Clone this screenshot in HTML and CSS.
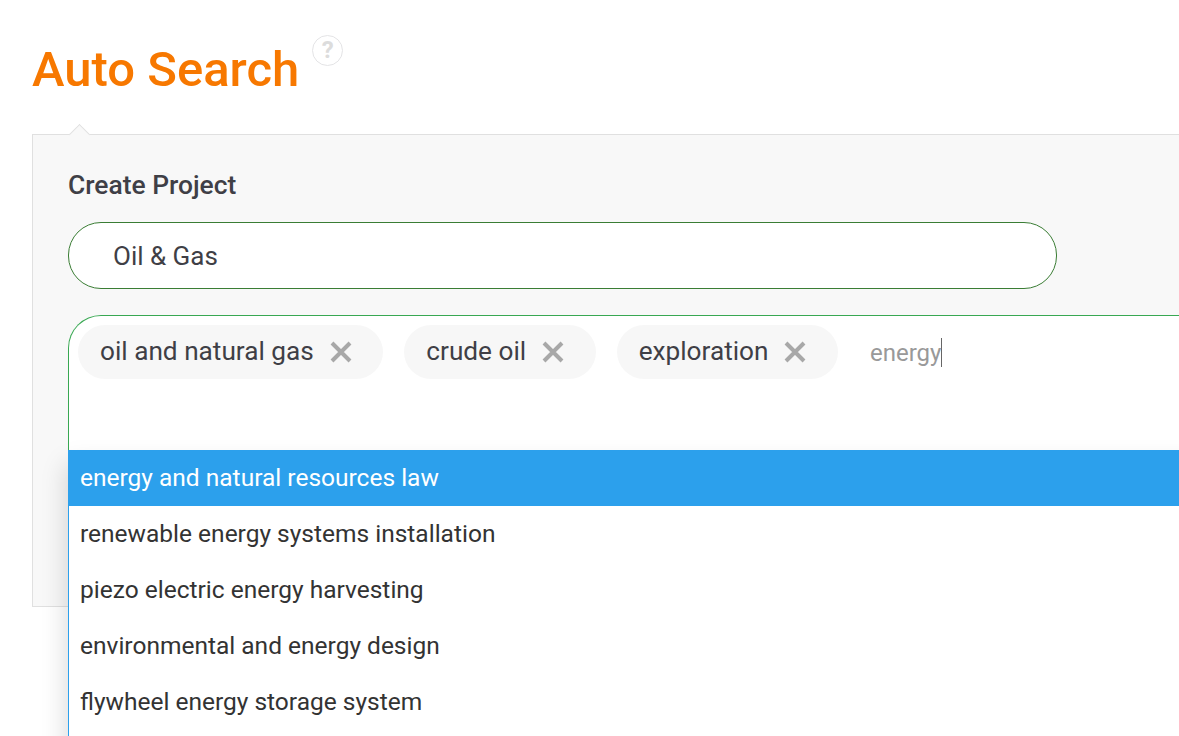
FILE: index.html
```html
<!DOCTYPE html>
<html lang="en">
<head>
  <meta charset="UTF-8">
  <title>Auto Search</title>
  <link rel="stylesheet" href="styles.css">
</head>
<body>
  <div class="heading">
    <h1>Auto Search</h1>
    <span class="help">?</span>
  </div>

  <div class="panel">
    <h2>Create Project</h2>
    <div class="name-field">Oil &amp; Gas</div>

    <div class="tag-box">
      <div class="tag"><span>oil and natural gas</span>
        <svg class="tag-x" viewBox="0 0 22 22"><path d="M2 2 L20 20 M20 2 L2 20"/></svg>
      </div>
      <div class="tag"><span>crude oil</span>
        <svg class="tag-x" viewBox="0 0 22 22"><path d="M2 2 L20 20 M20 2 L2 20"/></svg>
      </div>
      <div class="tag"><span>exploration</span>
        <svg class="tag-x" viewBox="0 0 22 22"><path d="M2 2 L20 20 M20 2 L2 20"/></svg>
      </div>
      <span class="typed">energy</span>

      <ul class="suggestions">
        <li class="active">energy and natural resources law</li>
        <li>renewable energy systems installation</li>
        <li>piezo electric energy harvesting</li>
        <li>environmental and energy design</li>
        <li>flywheel energy storage system</li>
      </ul>
    </div>
  </div>
</body>
</html>
```

FILE: styles.css
```css
html, body {
  height: 736px;
  overflow: hidden;
}

body {
  margin: 0;
  background-color: #fff;
  font-family: Roboto, sans-serif;
  color: #3f3f46;
}

.heading {
  display: flex;
  align-items: flex-start;
  height: 134px;
  padding-left: 32px;
  box-sizing: border-box;
}

h1 {
  margin: 42px 0 0;
  font-size: 49px;
  font-weight: 500;
  line-height: 56px;
  color: #f77800;
}

.help {
  width: 29px;
  height: 29px;
  margin: 35px 0 0 13px;
  border: 1px solid #e4e4e6;
  border-radius: 50%;
  text-align: center;
  font-size: 24px;
  font-weight: 700;
  line-height: 29px;
  color: #dcdcdc;
}

.panel {
  position: relative;
  width: 1300px;
  height: 473px;
  margin-left: 32px;
  padding: 0 0 0 35px;
  box-sizing: border-box;
  background-color: #f8f8f8;
  border: 1px solid #e0e0e0;
}

/* little arrow on top of the panel */
.panel::before {
  content: "";
  position: absolute;
  top: -8px;
  left: 39px;
  width: 14px;
  height: 14px;
  background-color: #f8f8f8;
  border-top: 1px solid #e0e0e0;
  border-left: 1px solid #e0e0e0;
  transform: rotate(45deg);
}

h2 {
  margin: 36px 0 0;
  font-size: 26.4px;
  font-weight: 500;
  line-height: 28px;
  color: #3f3f46;
}

.name-field {
  width: 989px;
  height: 67px;
  margin-top: 23px;
  padding-left: 44px;
  box-sizing: border-box;
  background-color: #fff;
  border: 1px solid #3a7d34;
  border-radius: 33px;
  font-size: 26px;
  line-height: 67px;
}

.tag-box {
  position: relative;
  display: flex;
  align-items: flex-start;
  gap: 21px;
  height: 200px;
  margin-top: 26px;
  padding: 9px 0 0 9px;
  box-sizing: border-box;
  background-color: #fff;
  border: 1px solid #38a852;
  border-right: none;
  border-radius: 33px 0 0 0;
}

.tag {
  display: flex;
  align-items: center;
  gap: 16px;
  height: 54px;
  padding: 0 31.5px 0 22px;
  box-sizing: border-box;
  background-color: #f7f7f7;
  border-radius: 27px;
  font-size: 26.2px;
  white-space: nowrap;
}

.tag span {
  margin-bottom: 2px;
}

.tag-x {
  width: 22px;
  height: 22px;
  fill: none;
  stroke: #a8a8a8;
  stroke-width: 4;
}

.typed {
  height: 29px;
  margin: 13px 0 0 11px;
  border-right: 1px solid #666;
  font-size: 24px;
  line-height: 30px;
  color: #999;
}

/* dropdown hangs over the panel edge and runs off the page */
.suggestions {
  position: absolute;
  top: 134px;
  left: -1px;
  width: 1230px;
  height: 400px;
  margin: 0;
  padding: 0;
  list-style: none;
  background-color: #fff;
  border-left: 1px solid #2ca0ec;
  box-shadow: -2px 14px 24px rgba(0, 0, 0, 0.15);
}

.suggestions li {
  height: 56px;
  padding-left: 11px;
  font-size: 24.5px;
  line-height: 56px;
  color: #333;
}

.suggestions li.active {
  background-color: #2ca0ec;
  color: #fff;
}
```
